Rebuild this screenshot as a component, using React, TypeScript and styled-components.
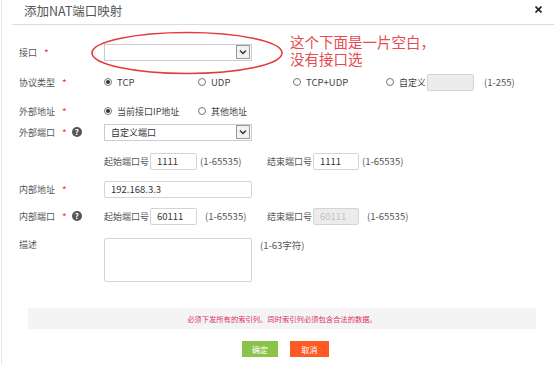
import styled, { createGlobalStyle } from "styled-components";

const Global = createGlobalStyle`
  html, body {
    margin: 0;
    padding: 0;
    background: #fff;
  }
  body {
    font-family: "Noto Sans CJK SC", "Noto Sans", sans-serif;
    color: #555;
  }
`;

const Dialog = styled.div`
  position: relative;
  width: 554px;
  height: 365px;
  overflow: hidden;
  box-sizing: border-box;
  border-left: 1px solid #e6e6e6;
  margin-left: 1px;
`;

const Header = styled.div`
  display: flex;
  align-items: center;
  justify-content: space-between;
  height: 24px;
  margin-left: 10px;
  padding: 0 13px 0 12px;
  border-bottom: 1px solid #dcdcdc;
`;

const Title = styled.div`
  font-size: 12.5px;
  color: #555;
  margin-top: -3px;
`;

const Close = styled.svg`
  width: 7px;
  height: 7px;
  margin-top: -5px;
`;

const Form = styled.div`
  display: flex;
  flex-direction: column;
  padding-left: 17px;
`;

const Row = styled.div<{ $top: number; $h?: number; $alignTop?: boolean }>`
  display: flex;
  align-items: ${({ $alignTop }) => ($alignTop ? "flex-start" : "center")};
  height: ${({ $h }) => $h ?? 18}px;
  margin-top: ${({ $top }) => $top}px;
  font-size: 9px;
`;

const Label = styled.div`
  display: flex;
  align-items: center;
  width: 85px;
  flex-shrink: 0;
  color: #555;
  font-size: 9px;
`;

const Star = styled.span`
  color: #e33;
  margin-left: 7px;
  font-size: 10px;
`;

const Help = styled.span`
  display: inline-flex;
  align-items: center;
  justify-content: center;
  width: 10px;
  height: 10px;
  margin-left: 5px;
  border-radius: 50%;
  background: #555;
  color: #fff;
  font-size: 8px;
  font-weight: bold;
  line-height: 1;
`;

const Select = styled.div`
  display: flex;
  align-items: center;
  justify-content: space-between;
  flex-shrink: 0;
  box-sizing: border-box;
  width: 148px;
  height: 17px;
  border: 1px solid #ccc;
  padding-left: 6px;
  font-size: 9px;
  color: #333;
`;

const Arrow = styled.span`
  display: flex;
  align-items: center;
  justify-content: center;
  width: 14px;
  height: 14px;
  margin-right: 1px;
  box-sizing: border-box;
  border: 1px solid #999;
  background: #f2f2f2;
`;

const Option = styled.div<{ $w: number }>`
  display: flex;
  align-items: center;
  flex-shrink: 0;
  width: ${({ $w }) => $w}px;
  color: #444;
  font-size: 9px;
`;

const Latin = styled.span`
  font-size: 9.5px;
`;

const Radio = styled.span<{ $checked?: boolean }>`
  display: inline-flex;
  align-items: center;
  justify-content: center;
  box-sizing: border-box;
  width: 8px;
  height: 8px;
  border-radius: 50%;
  border: 1px solid #777;
  margin-right: 5px;
  &::after {
    content: "";
    width: 4px;
    height: 4px;
    border-radius: 50%;
    background: ${({ $checked }) => ($checked ? "#333" : "transparent")};
  }
`;

const Input = styled.div<{ $w: number; $h?: number; $disabled?: boolean; $ml?: number }>`
  display: flex;
  align-items: center;
  flex-shrink: 0;
  box-sizing: border-box;
  width: ${({ $w }) => $w}px;
  height: ${({ $h }) => $h ?? 17}px;
  margin-left: ${({ $ml }) => $ml ?? 0}px;
  border: 1px solid #d4d4d4;
  border-radius: 2px;
  padding-left: 6px;
  background: ${({ $disabled }) => ($disabled ? "#ececec" : "#fff")};
  color: ${({ $disabled }) => ($disabled ? "#c2c2c2" : "#333")};
  font-size: 9.5px;
`;

const Hint = styled.span<{ $ml: number }>`
  margin-left: ${({ $ml }) => $ml}px;
  color: #555;
  font-size: 9.5px;
  white-space: nowrap;
`;

const PortGroup = styled.div`
  display: flex;
  align-items: center;
  width: 163px;
  flex-shrink: 0;
`;

const PortLabel = styled.span`
  margin-right: 1px;
  color: #555;
  font-size: 9px;
  white-space: nowrap;
`;

const Notice = styled.div`
  margin: 26px 19px 0 26px;
  height: 21px;
  display: flex;
  align-items: center;
  justify-content: center;
  background: #f4f4f4;
  color: #e0305e;
  font-size: 7.3px;
`;

const Actions = styled.div`
  display: flex;
  gap: 12px;
  margin-top: 12px;
  padding-left: 240px;
`;

const Button = styled.div<{ $color: string; $w: number }>`
  display: flex;
  align-items: center;
  justify-content: center;
  width: ${({ $w }) => $w}px;
  height: 16px;
  background: ${({ $color }) => $color};
  color: #fff;
  font-size: 8px;
`;

const Ellipse = styled.svg`
  position: absolute;
  left: 86px;
  top: 30px;
  width: 200px;
  height: 46px;
  overflow: visible;
`;

const Note = styled.div`
  position: absolute;
  left: 288px;
  top: 33px;
  display: flex;
  flex-direction: column;
  color: #e84a4f;
  font-size: 14.5px;
`;

const NoteLine = styled.div`
  height: 17px;
  line-height: 17px;
  white-space: nowrap;
`;

const Chevron = () => (
  <svg width="8" height="6" viewBox="0 0 8 6">
    <path d="M1 1.5 L4 4.5 L7 1.5" fill="none" stroke="#333" strokeWidth="1.4" />
  </svg>
);

function PortRow({ start, end, disabled, hintGap }: { start: string; end: string; disabled?: boolean; hintGap: number }) {
  return (
    <>
      <PortGroup>
        <PortLabel>起始端口号</PortLabel>
        <Input $w={47}>{start}</Input>
        <Hint $ml={hintGap}>(1-65535)</Hint>
      </PortGroup>
      <PortLabel>结束端口号</PortLabel>
      <Input $w={46} $disabled={disabled}>{end}</Input>
      <Hint $ml={hintGap}>(1-65535)</Hint>
    </>
  );
}

export default function App() {
  return (
    <>
      <Global />
      <Dialog>
        <Header>
          <Title>添加NAT端口映射</Title>
          <Close viewBox="0 0 7 7">
            <path d="M0.5 0.5 L6.5 6.5 M6.5 0.5 L0.5 6.5" stroke="#222" strokeWidth="1.6" />
          </Close>
        </Header>

        <Form>
          <Row $top={18}>
            <Label>接口<Star>*</Star></Label>
            <Select>
              <span />
              <Arrow><Chevron /></Arrow>
            </Select>
          </Row>

          <Row $top={12}>
            <Label>协议类型<Star>*</Star></Label>
            <Option $w={94}><Radio $checked /><Latin>TCP</Latin></Option>
            <Option $w={95}><Radio /><Latin>UDP</Latin></Option>
            <Option $w={93}><Radio /><Latin>TCP+UDP</Latin></Option>
            <Option $w={130}>
              <Radio />自定义
              <Input $w={47} $disabled $ml={1} />
              <Hint $ml={10}>(1-255)</Hint>
            </Option>
          </Row>

          <Row $top={11}>
            <Label>外部地址<Star>*</Star></Label>
            <Option $w={94}><Radio $checked />当前接口IP地址</Option>
            <Option $w={95}><Radio />其他地址</Option>
          </Row>

          <Row $top={3}>
            <Label>外部端口<Star>*</Star><Help>?</Help></Label>
            <Select>
              <span>自定义端口</span>
              <Arrow><Chevron /></Arrow>
            </Select>
          </Row>

          <Row $top={11}>
            <Label />
            <PortRow start="1111" end="1111" hintGap={3} />
          </Row>

          <Row $top={10}>
            <Label>内部地址<Star>*</Star></Label>
            <Input $w={148}>192.168.3.3</Input>
          </Row>

          <Row $top={9}>
            <Label>内部端口<Star>*</Star><Help>?</Help></Label>
            <PortRow start="60111" end="60111" disabled hintGap={8} />
          </Row>

          <Row $top={13} $h={44} $alignTop>
            <Label>描述</Label>
            <Input $w={148} $h={44} />
            <Hint $ml={8}>(1-63字符)</Hint>
          </Row>
        </Form>

        <Notice>必须下发所有的索引列。同时索引列必须包含合法的数据。</Notice>

        <Actions>
          <Button $color="#8bc34a" $w={36}>确定</Button>
          <Button $color="#fe5a24" $w={39}>取消</Button>
        </Actions>

        <Ellipse viewBox="0 0 200 46">
          <ellipse cx="99" cy="23" rx="95" ry="20.5" fill="none" stroke="#e23b3b" strokeWidth="1.6" />
        </Ellipse>
        <Note>
          <NoteLine>这个下面是一片空白，</NoteLine>
          <NoteLine>没有接口选</NoteLine>
        </Note>
      </Dialog>
    </>
  );
}
